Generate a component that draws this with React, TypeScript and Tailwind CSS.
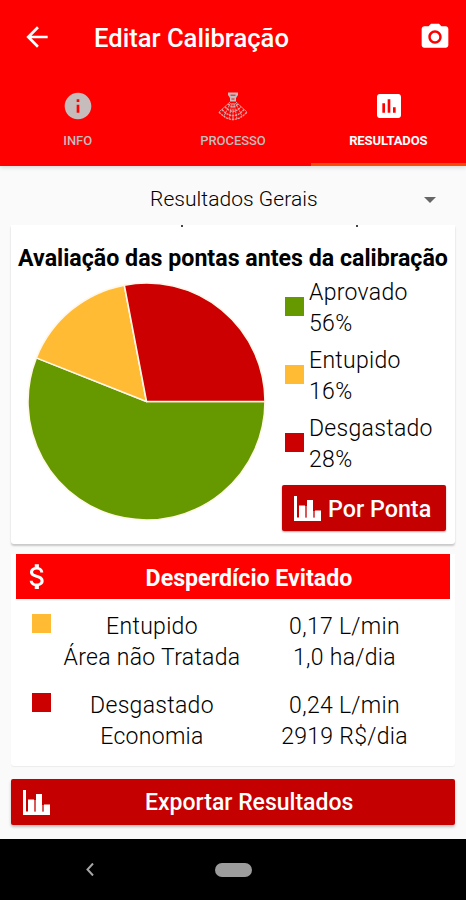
import type { ReactNode } from "react";
import { MdArrowBack, MdPhotoCamera, MdInfo, MdInsertChart, MdAttachMoney } from "react-icons/md";

function BarsIcon() {
  return (
    <svg width="27" height="25" viewBox="0 0 27 25" fill="white" className="block shrink-0">
      <path d="M0 0h3v21.500h24v3.500H0z" />
      <path d="M5 9.500h6V22H5zM13 4h6v18h-6zM21 14.500h6V22h-6z" />
      <path d="M11 10h2v11.500h-2zM19 15h2v6.500h-2z" fillOpacity="0.35" />
    </svg>
  );
}

function NozzleIcon() {
  return (
    <svg width="30" height="29" viewBox="0 0 30 29" className="block" fill="none" stroke="#d8a8a8">
      <path d="M10 0.500h10V3l-2 3v3.500h-6V6l-2-3z" fill="#c6bcbc" stroke="none" />
      <path d="M12.500 3.200h5M13.500 7h3" stroke="#f00000" strokeWidth="0.900" />
      <path d="M12 10L1 20M18 10l11 10M12.500 11L6 24M17.500 11l6.500 13M14 11L11 27M16 11l3 16M15 11v17" strokeWidth="1" strokeDasharray="2.200 0.600" />
      <path d="M1 20q14 15 28 0M4 17.500q11 12.500 22 0M7 14.800q8 9 16 0M10 12q5 5 10 0" strokeWidth="1.400" strokeDasharray="2.200 0.800" />
    </svg>
  );
}

function Tab({ label, active, children }: { label: string; active?: boolean; children: ReactNode }) {
  return (
    <div className={active ? "relative flex-1 flex flex-col items-center text-white" : "relative flex-1 flex flex-col items-center text-[#c6bcbc]"}>
      <div className="mt-[14px] flex h-[33px] items-end justify-center">{children}</div>
      <span className={active ? "mt-[9px] text-[13px] leading-[20px] font-bold tracking-[-0.1px]" : "mt-[9px] text-[13px] leading-[20px] font-medium tracking-[-0.05px]"}>{label}</span>
      {active && <div className="absolute inset-x-0 bottom-0 h-[3px] bg-[#ff4a08]" />}
    </div>
  );
}

const slices = [
  { name: "Aprovado", pct: 56, color: "#669900" },
  { name: "Entupido", pct: 16, color: "#ffbb33" },
  { name: "Desgastado", pct: 28, color: "#cc0000" },
];

function Pie() {
  let start = 0;
  const at = (p: number) => {
    const a = (p / 100) * Math.PI * 2;
    return `${120.5 + 118.5 * Math.cos(a)} ${120.5 + 118.5 * Math.sin(a)}`;
  };
  return (
    <svg width="241" height="240" viewBox="0 0 241 240" className="block shrink-0">
      {slices.map((s) => {
        const d = `M120.5 120.5L${at(start)}A118.5 118.5 0 ${s.pct > 50 ? 1 : 0} 1 ${at(start + s.pct)}Z`;
        start += s.pct;
        return <path key={s.name} d={d} fill={s.color} stroke="#fff7e8" strokeWidth="1.6" strokeLinejoin="round" />;
      })}
    </svg>
  );
}

const savings = [
  { color: "bg-[#ffbb33]", left: ["Entupido", "Área não Tratada"], right: ["0,17 L/min", "1,0 ha/dia"] },
  { color: "bg-[#cc0000]", left: ["Desgastado", "Economia"], right: ["0,24 L/min", "2919 R$/dia"] },
];

export default function App() {
  return (
    <div className="flex h-[900px] w-[466px] flex-col overflow-hidden bg-[#fafafa] font-['Roboto',sans-serif] text-black">
      <header className="z-10 flex h-[166px] shrink-0 flex-col bg-[#ff0000] text-white shadow-[0_2px_4px_rgba(0,0,0,0.12)]">
        <div className="flex h-[75px] items-center pl-[21px] pr-[15px]">
          <MdArrowBack size={32} className="-mt-[2px]" />
          <h1 className="ml-[41px] flex-1 text-[25.6px] font-medium leading-[30px]">Editar Calibração</h1>
          <MdPhotoCamera size={32} className="-mt-[2px]" />
        </div>
        <div className="flex flex-1">
          <Tab label="INFO"><MdInfo size={32} /></Tab>
          <Tab label="PROCESSO"><div className="pb-[1px]"><NozzleIcon /></div></Tab>
          <Tab label="RESULTADOS" active><MdInsertChart size={32} className="ml-[1px]" /></Tab>
        </div>
      </header>

      <div className="flex h-[59px] shrink-0 items-center pl-[150px] pr-[30px] pt-[8px]">
        <span className="flex-1 whitespace-nowrap text-[21px] font-light tracking-[0.05px]">Resultados Gerais</span>
        <svg width="12" height="6" viewBox="0 0 12 6" className="block"><path d="M0 0h12L6 6z" fill="#666" /></svg>
      </div>

      <section className="mx-[11px] h-[319px] shrink-0 overflow-hidden rounded-b-[3px] bg-white shadow-[0_2px_2px_rgba(0,0,0,0.2)]">
        <div className="flex h-[16px] justify-between pl-[170px] pr-[97px]">
          <i className="h-[2px] w-[2px] bg-[#444]" />
          <i className="h-[2px] w-[2px] bg-[#444]" />
        </div>
        <h2 className="whitespace-nowrap text-center text-[23.2px] font-bold leading-[34px]">Avaliação das pontas antes da calibração</h2>
        <div className="flex pl-[15px]">
          <div className="pt-[6px]"><Pie /></div>
          <div className="ml-[15px] flex w-[164px] flex-col">
            {slices.map((s) => (
              <div key={s.name} className="flex h-[68px] items-start pl-[3px]">
                <i className="mt-[22px] h-[19px] w-[19px]" style={{ backgroundColor: s.color }} />
                <div className="ml-[5px] mt-[2px] text-[23px] font-light leading-[31px] tracking-[0.3px]">
                  <div>{s.name}</div>
                  <div>{s.pct}%</div>
                </div>
              </div>
            ))}
            <button className="mt-[6px] flex h-[46px] items-center rounded-[2px] bg-[#c40000] pl-[12px] text-[23.3px] font-medium text-white shadow-[0_1px_2px_rgba(0,0,0,0.35)]">
              <BarsIcon />
              <span className="ml-[7px] mt-[2px] whitespace-nowrap">Por Ponta</span>
            </button>
          </div>
        </div>
      </section>

      <section className="mx-[11px] mt-[10px] h-[212px] shrink-0 rounded-b-[3px] bg-white px-[5px] shadow-[0_1px_1px_rgba(0,0,0,0.06)]">
        <div className="flex h-[45px] items-center bg-[#ff0000] text-white">
          <div className="ml-[5px] w-8"><MdAttachMoney size={33} /></div>
          <h2 className="mr-[40px] flex-1 pl-[35px] pt-[3px] text-center text-[23.2px] font-bold">Desperdício Evitado</h2>
        </div>
        <div className="flex flex-col pt-[12px]">
          {savings.map((row) => (
            <div key={row.color} className="flex h-[79px] text-center text-[23px] font-light leading-[31px] tracking-[0.3px]">
              <i className={`ml-[16px] mt-[3px] h-[19px] w-[19px] ${row.color}`} />
              <div className="ml-[4px] w-[194px]">{row.left.map((t) => <div key={t}>{t}</div>)}</div>
              <div className="w-[191px]">{row.right.map((t) => <div key={t}>{t}</div>)}</div>
            </div>
          ))}
        </div>
      </section>

      <button className="mx-[11px] mt-[13px] flex h-[46px] shrink-0 items-center rounded-[2px] bg-[#c40000] pl-[12px] text-[23px] font-medium text-white shadow-[0_2px_3px_rgba(0,0,0,0.25)]">
        <BarsIcon />
        <span className="ml-[95px] mt-[3px] whitespace-nowrap">Exportar Resultados</span>
      </button>

      <nav className="mt-auto flex h-[61px] shrink-0 items-center bg-black">
        <svg width="8" height="13" viewBox="0 0 8 13" className="ml-[86px] block" fill="none" stroke="#a6a6a6" strokeWidth="2"><path d="M7 .5L1.500 6.500 7 12.500" /></svg>
        <div className="ml-[121px] h-[14px] w-[37px] rounded-full bg-[#9c9c9c]" />
      </nav>
    </div>
  );
}
